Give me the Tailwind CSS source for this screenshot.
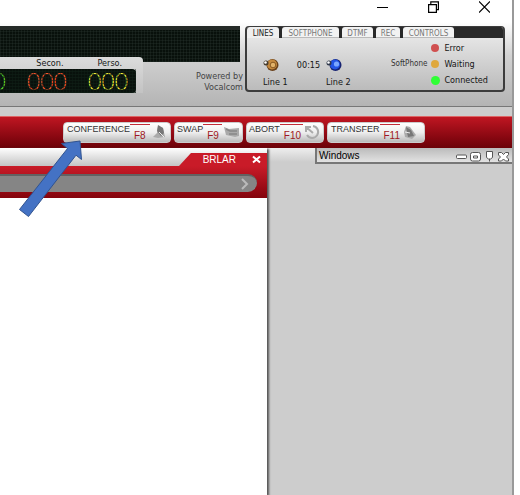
<!DOCTYPE html>
<html lang="en">
<head>
<meta charset="utf-8">
<title>Vocalcom agent desktop</title>
<script src="https://cdn.jsdelivr.net/npm/@tailwindcss/browser@4"></script>
</head>
<body class="bg-white font-['DejaVu_Sans_Condensed','DejaVu_Sans',sans-serif] text-[9px] leading-3 text-[#151515]">
<div class="relative mr-[6px] flex min-h-screen flex-col overflow-hidden border-r-2 border-[#999]">

  <div class="flex h-[22px] items-start justify-end gap-10 pr-[22px] text-black">
    <button aria-label="Minimize" class="h-[14px] w-[11px]"><svg viewBox="0 0 11 14" class="w-full" fill="none" stroke="currentColor"><path d="M0 7.5h11"/></svg></button>
    <button aria-label="Restore" class="h-[14px] w-[11px]"><svg viewBox="0 0 11 14" class="w-full" fill="none" stroke="currentColor" stroke-width="1.2"><path d="M.6 4.6h7.8v7.8H.6zM2.8 4.4V1.8h7.6v7.8H8.6"/></svg></button>
    <button aria-label="Close" class="h-[14px] w-[11px]"><svg viewBox="0 0 11 14" class="w-full" fill="none" stroke="currentColor" stroke-width="1.2"><path d="M0 1.5l11 11M11 1.5l-11 11"/></svg></button>
  </div>

  <header class="flex h-[85px] gap-[5px] border-b border-[#777] bg-linear-to-b from-white via-[#d2d2d2] via-40% to-[#b4b4b4] pt-1 pr-[7px]">
    <section class="flex min-w-0 flex-1 flex-col">
      <div class="h-9 border-t-4 border-[#252a27] bg-[#08100b] bg-[repeating-linear-gradient(90deg,#33403a44_0_1px,transparent_1px_3px),repeating-linear-gradient(0deg,#33403a44_0_1px,transparent_1px_3px)]"></div>
      <div class="-mt-[5px] flex items-start justify-between">
        <div class="w-[143px] rounded-tr-sm bg-linear-to-b from-[#dcdcdc] to-[#c3c3c3] pr-[7px]">
          <div class="flex h-3 justify-end gap-[34px] pr-[14px] text-[9px]"><span>Secon.</span><span>Perso.</span></div>
          <div class="relative flex h-6 items-center justify-end gap-[21px] rounded-r-[4px] bg-[#08110c] pr-2 font-[Lato,sans-serif] text-[23px] leading-7 font-light">
            <span class="text-[#63e02c]">000</span><span class="text-[#ff5a30]">000</span><span class="text-[#f5f23a]">000</span>
            <div class="absolute inset-0 bg-[repeating-linear-gradient(90deg,#10201777_0_1px,transparent_1px_3px),repeating-linear-gradient(0deg,#10201799_0_1px,transparent_1px_3px)]"></div>
          </div>
        </div>
        <p class="-mr-[3px] pt-[14px] text-right leading-[11px] text-[#444]">Powered by<br>Vocalcom</p>
      </div>
    </section>

    <section class="flex h-[66px] w-[260px] flex-col overflow-hidden rounded-[4px] border-2 border-t border-[#3c3c3c] bg-linear-to-b from-[#eee] to-[#bbb]">
      <nav class="flex h-[11px] gap-[3px] bg-[#292929] text-[8px] leading-[13px] text-[#777]">
        <button class="w-8 rounded-t-[3px] bg-[#efefef] text-[#222]">LINES</button>
        <button class="w-[57px] rounded-t-[3px] border-b border-[#bbb] bg-[#f2f2f2]">SOFTPHONE</button>
        <button class="w-[31px] rounded-t-[3px] border-b border-[#bbb] bg-[#f2f2f2]">DTMF</button>
        <button class="w-6 rounded-t-[3px] border-b border-[#bbb] bg-[#f2f2f2]">REC</button>
        <button class="w-[51px] rounded-t-[3px] border-b border-[#bbb] bg-[#f2f2f2]">CONTROLS</button>
      </nav>
      <div class="flex flex-1 justify-between pr-[15px] pl-4">
        <div class="grid grid-cols-[28px_35px_28px] content-start items-center pt-5 text-center whitespace-nowrap">
          <svg viewBox="0 0 16 14" class="h-[14px] w-4"><circle cx="9.5" cy="7" r="6" fill="#69401a"/><circle cx="9" cy="6.5" r="5" fill="#c5893d"/><circle cx="10" cy="7" r="2.8" fill="#e2b269" stroke="#8b5a22"/><circle cx="3" cy="5" r="2.5" fill="#493e30"/><circle cx="2.5" cy="4.5" r="1.3" fill="#fff"/></svg>
          <span>00:15</span>
          <svg viewBox="0 0 16 14" class="h-[14px] w-4"><circle cx="9.5" cy="7" r="6" fill="#172371"/><circle cx="9" cy="6.5" r="5" fill="#2355e5"/><circle cx="10.5" cy="6" r="2.6" fill="#7ba8ff"/><circle cx="3" cy="5" r="2.5" fill="#30394b"/><circle cx="2.5" cy="4.5" r="1.3" fill="#fff"/></svg>
          <span class="pt-1 text-left">Line 1</span><span></span><span class="pt-1 text-left">Line 2</span>
        </div>
        <div class="grid grid-cols-[auto_9px_auto] content-start items-center gap-x-1 gap-y-[4px] pt-1 whitespace-nowrap">
          <span></span><i class="size-2 rounded-full bg-[#d05050]"></i><span>Error</span>
          <span class="text-[8px] text-[#333]">SoftPhone</span><i class="size-2 rounded-full bg-[#dfa83e]"></i><span>Waiting</span>
          <span></span><i class="size-[9px] rounded-full bg-[#2fff35]"></i><span>Connected</span>
        </div>
      </div>
    </section>
  </header>

  <div class="h-[9px] bg-[#cdcdcd]"></div>

  <nav class="flex h-8 items-start gap-[3px] border-t border-[#d66] bg-linear-to-b from-[#c01622] to-[#6c0208] pt-[5px] pl-[63px] font-['Liberation_Sans',sans-serif] text-[9px] leading-[13px]">
    <button class="flex h-[21px] w-[108px] rounded-[4px] border border-[#ccc] bg-linear-to-b from-white via-[#eee] to-[#bbb] pl-[3px] text-[#333]">
      <span>CONFERENCE</span><span class="mt-px flex-1 border-t border-[#c22c38] pt-[5px] pl-1 text-left text-[10px] leading-3 text-[#a01822]">F8</span>
      <svg viewBox="0 0 20 18" class="h-[18px] w-5"><path d="M8 3l5 2 2 9-7 1-5-1 4-4z" fill="#aaa"/><path d="M8 2l5 3 1 5-3 3-4-5z" fill="#777"/><path d="M9 9l5 5" stroke="#eee"/></svg>
    </button>
    <button class="flex h-[21px] w-[69px] rounded-[4px] border border-[#ccc] bg-linear-to-b from-white via-[#eee] to-[#bbb] pl-[2px] text-[#333]">
      <span>SWAP</span><span class="mt-px flex-1 border-t border-[#c22c38] pt-[5px] pl-1 text-left text-[10px] leading-3 text-[#a01822]">F9</span>
      <svg viewBox="0 0 20 18" class="h-[18px] w-5"><path d="M2 4l5 2 10-1v8l-4 1-9-2z" fill="#aaa"/><path d="M4 6l4 2h7M7 11h8" stroke="#888" stroke-width="1.500" fill="none"/></svg>
    </button>
    <button class="flex h-[21px] w-[78px] rounded-[4px] border border-[#ccc] bg-linear-to-b from-white via-[#eee] to-[#bbb] pl-[2px] text-[#333]">
      <span>ABORT</span><span class="mt-px flex-1 border-t border-[#c22c38] pt-[5px] pl-1 text-left text-[10px] leading-3 text-[#a01822]">F10</span>
      <svg viewBox="0 0 20 18" class="h-[18px] w-5" fill="none" stroke="#aaa" stroke-width="2"><path d="M10 3a6 6 0 1 1-6 9M3 9V4h5M3 4l7 6"/></svg>
    </button>
    <button class="flex h-[21px] w-[98px] rounded-[4px] border border-[#ccc] bg-linear-to-b from-white via-[#eee] to-[#bbb] pl-[3px] text-[#333]">
      <span>TRANSFER</span><span class="mt-px flex-1 border-t border-[#c22c38] pt-[5px] pl-1 text-left text-[10px] leading-3 text-[#a01822]">F11</span>
      <svg viewBox="0 0 20 18" class="mr-1 h-[18px] w-5"><path d="M6 3l4 1 6 8-4 4-7-2-1-5z" fill="#aaa"/><path d="M6 4l5 3 3 6-6 1z" fill="#777"/><path d="M5 9l5 1" stroke="#eee"/></svg>
    </button>
  </nav>

  <main class="flex flex-1 items-stretch bg-[#cdcdcd]">
    <section class="z-10 flex w-[267px] flex-col bg-white shadow-[2px_1px_2px_#555]">
      <div class="flex h-[18px] items-end justify-end bg-linear-to-b from-white to-[#c4c4c4]">
        <div class="flex h-[13px] w-[88px] items-center justify-end gap-4 bg-[#c91b28] pr-[6px] font-['Liberation_Sans',sans-serif] text-[10px] text-white [clip-path:polygon(12px_0,100%_0,100%_100%,0_100%)]">
          <span>BRLAR</span>
          <button aria-label="Close tab" class="size-[9px]"><svg viewBox="0 0 9 9" fill="none" stroke="#fff" stroke-width="2"><path d="M1 1.5l7 6M8 1.5l-7 6"/></svg></button>
        </div>
      </div>
      <div class="h-8 bg-linear-to-b from-[#c91b28] to-[#84040c] pt-2 pr-[10px]">
        <div class="flex h-[18px] items-center justify-end rounded-r-full border-t-2 border-[#626262] bg-[#858585] pr-2">
          <button aria-label="Next" class="h-3 w-2"><svg viewBox="0 0 8 12" fill="none" stroke="#bbb" stroke-width="2"><path d="M1 1l5 5-5 5"/></svg></button>
        </div>
      </div>
    </section>
    <aside class="flex min-w-0 flex-1 items-start bg-linear-to-b from-[#eee] to-[#cdcdcd] to-[14px] pl-12">
      <div class="flex h-4 flex-1 items-end justify-between border-b-2 border-l-2 border-[#777] bg-linear-to-b from-[#bbb] to-[#e2e2e2] pr-[3px] pl-[2px] font-['Liberation_Sans',sans-serif] text-[10px] text-black">
        <h2>Windows</h2>
        <div class="flex gap-[3px] text-[#555]">
          <button aria-label="Minimize panel" class="size-[11px]"><svg viewBox="0 0 11 11" fill="#fff" stroke="currentColor"><rect x=".5" y="4" width="10" height="3.5" rx="1"/></svg></button>
          <button aria-label="Maximize panel" class="size-[11px]"><svg viewBox="0 0 11 11" fill="#fff" stroke="currentColor"><rect x=".5" y="1.5" width="10" height="8.5" rx="2"/><path d="M3.500 5h4v2h-4z"/></svg></button>
          <button aria-label="Pin panel" class="size-[11px]"><svg viewBox="0 0 11 11" fill="#fff" stroke="currentColor"><path d="M2.500 .5h6v6l-2 1.500h-2l-2-1.500zM5.500 8v2.500"/></svg></button>
          <button aria-label="Close panel" class="size-[11px]"><svg viewBox="0 0 11 11" fill="#fff" stroke="currentColor"><path d="M.5 1.500h3l2 2 2-2h3v2L8.500 6l2 2v2h-3l-2-2-2 2h-3V8l2-2-2-2z"/></svg></button>
        </div>
      </div>
    </aside>
  </main>

  <svg class="pointer-events-none absolute top-[139px] left-[17px] z-20 h-20 w-[68px]" viewBox="17 139 68 80" role="img" aria-label="Arrow pointing to Conference"><path d="M80 141l1.500 18.500-5.500-4.300L28.500 216.500 19.500 209.500 67.500 148.500 61.500 143.500z" fill="#4472c4" stroke="#31538f"/></svg>
</div>
</body>
</html>
